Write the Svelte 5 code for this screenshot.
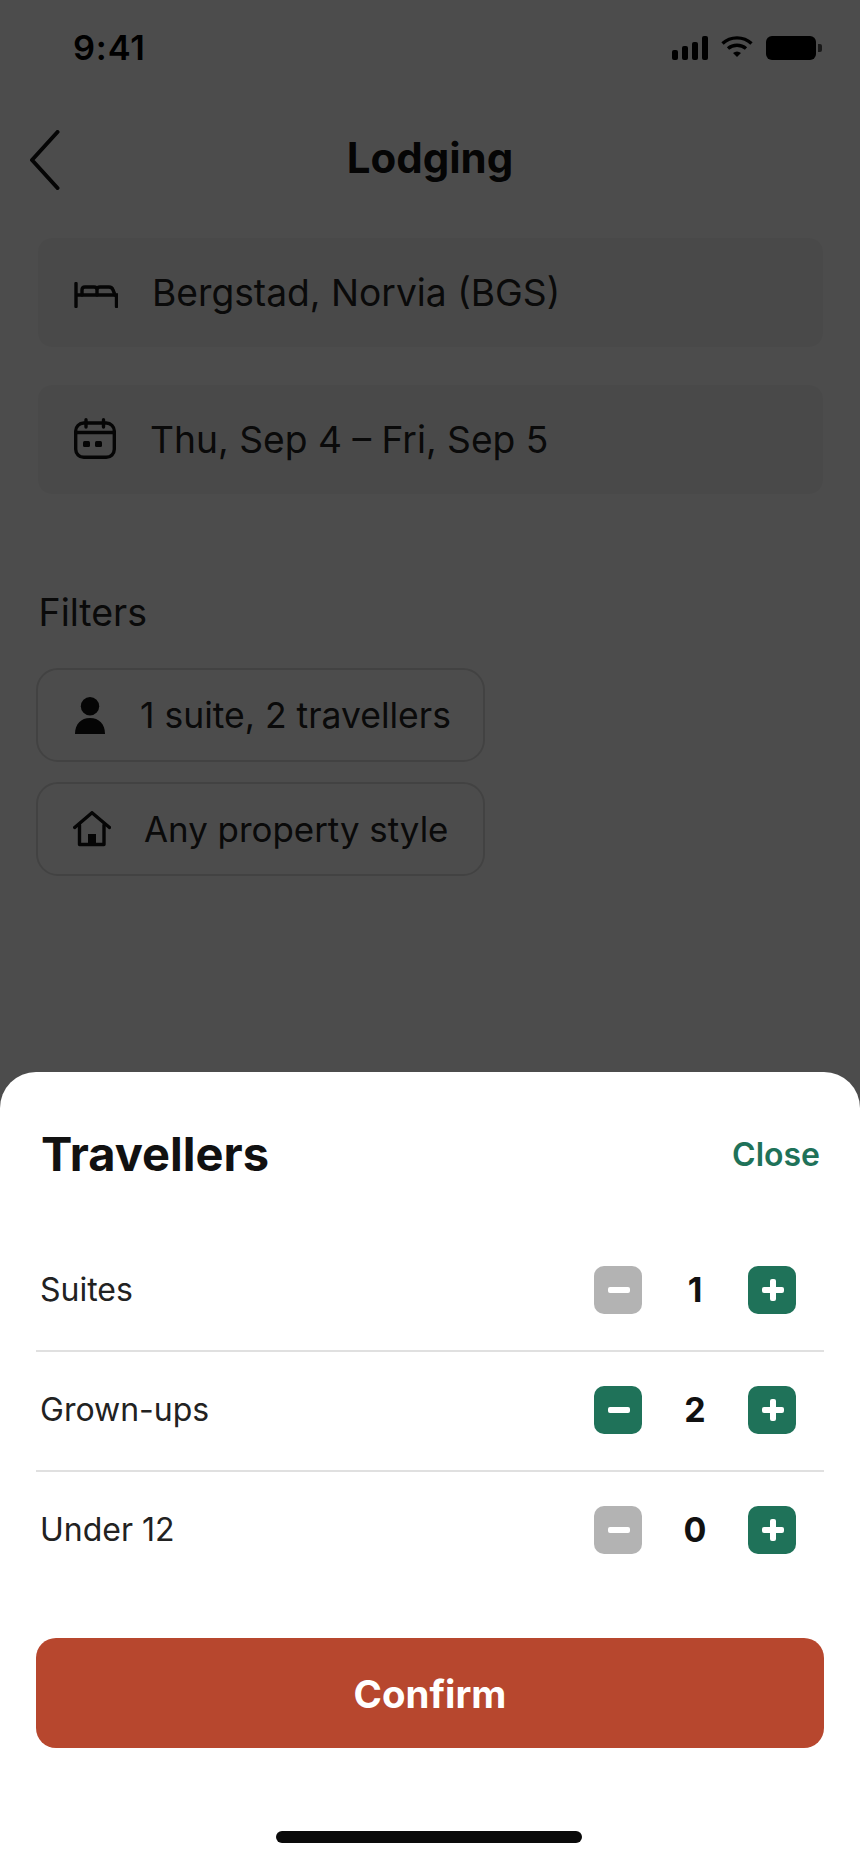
<script>
  const rows = [
    { label: 'Suites', value: 1, canDecrease: false },
    { label: 'Grown-ups', value: 2, canDecrease: true },
    { label: 'Under 12', value: 0, canDecrease: false }
  ];
</script>

<div class="page">
  <div class="status">
    <span class="time">9:41</span>
    <div class="status-icons">
      <div class="signal"><i class="b1"></i><i class="b2"></i><i class="b3"></i><i class="b4"></i></div>
      <svg class="wifi" width="32" height="21" viewBox="0 0 32 21" fill="none" stroke="#000" stroke-width="3.4">
        <path d="M1.5 7.5C9.5 0 22.5 0 30.5 7.5" />
        <path d="M7 12.5C12 8.2 20 8.2 25 12.5" />
        <path d="M12 17L16 21L20 17C17.5 15 14.500 15 12 17Z" fill="#000" stroke="none" />
      </svg>
      <div class="battery"></div>
      <div class="battery-cap"></div>
    </div>
  </div>

  <header class="nav">
    <svg class="back" width="30" height="60" viewBox="0 0 30 60" fill="none" stroke="#111" stroke-width="4" stroke-linecap="round" stroke-linejoin="round">
      <path d="M27.500 2L2 30L27.500 58" />
    </svg>
    <h1>Lodging</h1>
  </header>

  <div class="fields">
    <div class="field">
      <svg class="bed" width="44" height="26" viewBox="0 0 44 26" fill="none" stroke="#111" stroke-width="3.400" stroke-linecap="round">
        <path d="M2 1.500V24.500M2 13H42.500V24.500" />
        <path d="M8 13V8Q8 5 11 5H20Q23 5 23 8V13M23 8Q23 5 26 5H35Q38 5 39 8L41 13" />
      </svg>
      <span>Bergstad, Norvia (BGS)</span>
    </div>
    <div class="field">
      <svg class="cal" width="42" height="41" viewBox="0 0 42 41" fill="none" stroke="#111" stroke-width="3.400" stroke-linecap="round">
        <rect x="1.700" y="5" width="38.600" height="34.300" rx="8" />
        <path d="M1.700 14.500H40.300M12 1.700V9M29.500 1.700V9" />
        <rect x="9" y="23" width="7" height="6" fill="#111" stroke="none" rx="1.500" />
        <rect x="21" y="23" width="7" height="6" fill="#111" stroke="none" rx="1.500" />
      </svg>
      <span>Thu, Sep 4 – Fri, Sep 5</span>
    </div>
  </div>

  <h2 class="filters-title">Filters</h2>

  <div class="chips">
    <div class="chip chip-person">
      <svg width="30" height="37" viewBox="0 0 30 37" fill="#111">
        <circle cx="15" cy="9.200" r="9.200" />
        <path d="M0 37C0 27 6 21 15 21C24 21 30 27 30 37Z" />
      </svg>
      <span>1 suite, 2 travellers</span>
    </div>
    <div class="chip chip-home">
      <svg width="38" height="36" viewBox="0 0 38 36" fill="none" stroke="#111" stroke-width="3.400" stroke-linecap="round" stroke-linejoin="round">
        <path d="M1.700 16.500L19 1.700L36.500 16.500" />
        <path d="M6.500 14V33.500H31V14" />
        <rect x="15" y="23" width="8" height="11" fill="#111" stroke="none" />
      </svg>
      <span>Any property style</span>
    </div>
  </div>

  <div class="scrim"></div>

  <section class="sheet">
    <div class="sheet-head">
      <h3>Travellers</h3>
      <span class="close">Close</span>
    </div>
    <div class="rows">
      {#each rows as row}
        <div class="row">
          <span class="label">{row.label}</span>
          <div class="stepper">
            <div class="step" class:off={!row.canDecrease}><i class="hbar"></i></div>
            <span class="value">{row.value}</span>
            <div class="step"><i class="hbar"></i><i class="vbar"></i></div>
          </div>
        </div>
      {/each}
    </div>
    <div class="confirm">Confirm</div>
    <div class="home-bar"></div>
  </section>
</div>

<style>
  :global(body) {
    margin: 0;
    background: #fff;
  }

  .page {
    position: relative;
    width: 860px;
    height: 1864px;
    overflow: hidden;
    background: #fff;
    color: #111;
    font-family: Inter, "Liberation Sans", sans-serif;
  }

  .status {
    display: flex;
    justify-content: space-between;
    align-items: center;
    height: 24px;
    padding: 36px 38px 0 73px;
  }

  .time {
    font-size: 34.500px;
    font-weight: 600;
    line-height: 24px;
    color: #000;
    letter-spacing: 0.8px;
  }

  .status-icons {
    display: flex;
    align-items: center;
  }

  .signal {
    display: flex;
    align-items: flex-end;
    gap: 4px;
    height: 24px;
    margin-right: 13px;
  }

  .signal i {
    display: block;
    width: 6px;
    background: #000;
    border-radius: 2px;
  }

  .b1 { height: 10px; }
  .b2 { height: 14px; }
  .b3 { height: 18px; }
  .b4 { height: 24px; }

  .wifi {
    margin-right: 13px;
    margin-top: -3px;
  }

  .battery {
    width: 50px;
    height: 24px;
    background: #000;
    border-radius: 6px;
  }

  .battery-cap {
    width: 4px;
    height: 8px;
    margin-left: 2px;
    background: #555;
    border-radius: 0 2px 2px 0;
  }

  .nav {
    position: relative;
    display: flex;
    align-items: center;
    justify-content: center;
    height: 60px;
    margin-top: 70px;
  }

  .back {
    position: absolute;
    left: 30px;
    top: 0;
  }

  h1 {
    margin: -4px 0 0;
    font-size: 42px;
    font-weight: 700;
    line-height: 50px;
    color: #111;
  }

  .fields {
    display: flex;
    flex-direction: column;
    gap: 38px;
    margin: 48px 37px 0 38px;
  }

  .field {
    display: flex;
    align-items: center;
    gap: 34px;
    height: 109px;
    padding-left: 36px;
    border-radius: 14px;
    background: #f6f6f6;
    font-size: 37.200px;
    color: #222;
  }

  .bed {
    margin-top: 5px;
  }

  .cal {
    margin-top: -2px;
  }

  .filters-title {
    margin: 97px 0 0 38.500px;
    font-size: 37.500px;
    font-weight: 400;
    line-height: 44px;
    color: #222;
  }

  .chips {
    display: flex;
    flex-direction: column;
    gap: 20px;
    width: 449px;
    margin: 33px 0 0 36px;
  }

  .chip {
    display: flex;
    align-items: center;
    height: 94px;
    box-sizing: border-box;
    border: 2px solid #ddd;
    border-radius: 22px;
    font-size: 35.500px;
    color: #222;
  }

  .chip-person {
    gap: 35px;
    padding-left: 37px;
  }

  .chip-home {
    gap: 33px;
    padding-left: 35px;
    font-size: 34.900px;
  }

  .scrim {
    position: absolute;
    inset: 0;
    background: rgba(0, 0, 0, 0.7);
  }

  .sheet {
    position: absolute;
    left: 0;
    right: 0;
    bottom: 0;
    height: 792px;
    box-sizing: border-box;
    padding: 0 36px;
    background: #fff;
    border-radius: 36px 36px 0 0;
  }

  .sheet-head {
    display: flex;
    justify-content: space-between;
    align-items: center;
    height: 56px;
    padding: 54px 4px 0 5px;
  }

  h3 {
    margin: 0;
    font-size: 47px;
    font-weight: 700;
    line-height: 56px;
    color: #111;
  }

  .close {
    font-size: 32px;
    font-weight: 600;
    color: #1f7259;
  }

  .rows {
    margin-top: 50px;
  }

  .row {
    display: flex;
    align-items: center;
    justify-content: space-between;
    height: 118px;
    padding: 0 28px 0 5px;
    border-bottom: 2px solid #e0e0e0;
  }

  .row:last-child {
    border-bottom: none;
  }

  .label {
    font-size: 32px;
    color: #222;
    margin: -4px 0 0 -1px;
  }

  .stepper {
    display: flex;
    align-items: center;
    margin-top: -3px;
  }

  .step {
    position: relative;
    width: 48px;
    height: 48px;
    border-radius: 10px;
    background: #1f7259;
  }

  .step.off {
    background: #b3b3b3;
  }

  .hbar {
    position: absolute;
    left: 14px;
    top: 21px;
    width: 22px;
    height: 6px;
    border-radius: 2px;
    background: #fff;
  }

  .vbar {
    position: absolute;
    left: 22px;
    top: 13px;
    width: 6px;
    height: 22px;
    border-radius: 2px;
    background: #fff;
  }

  .value {
    width: 106px;
    text-align: center;
    font-size: 34px;
    font-weight: 700;
    color: #111;
  }

  .confirm {
    display: flex;
    align-items: center;
    justify-content: center;
    height: 110px;
    box-sizing: border-box;
    padding-top: 2px;
    margin-top: 48px;
    border-radius: 20px;
    background: #b7472e;
    color: #fff;
    font-size: 38.400px;
    font-weight: 700;
  }

  .home-bar {
    width: 306px;
    height: 12px;
    margin: 83px auto 0;
    border-radius: 6px;
    background: #0a0a0a;
    transform: translateX(-1px);
  }
</style>
